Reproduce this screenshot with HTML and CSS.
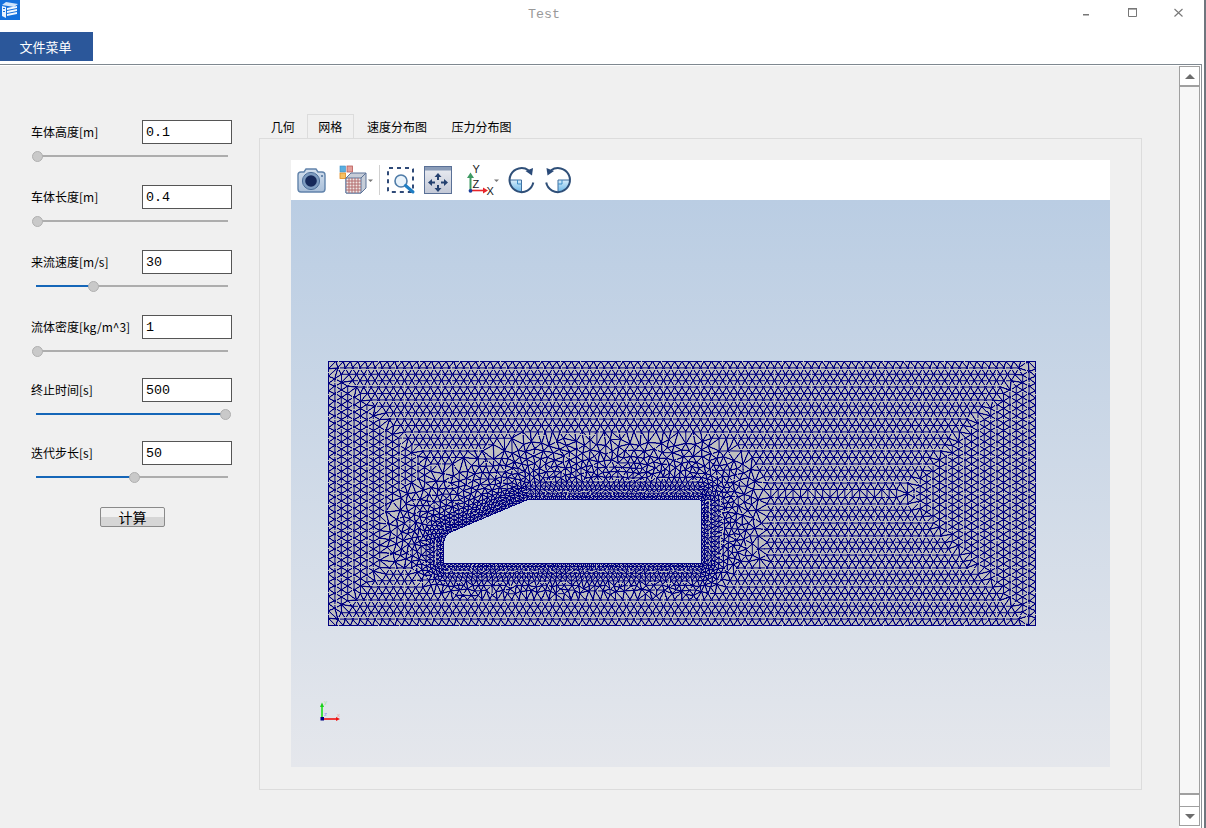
FILE: index.html
```html
<!DOCTYPE html>
<html lang="zh">
<head>
<meta charset="utf-8">
<title>Test</title>
<link rel="stylesheet" href="styles.css">
</head>
<body>
<div class="app">
  <header class="titlebar">
    <svg class="logo" viewBox="0 0 20 20" width="20" height="20">
      <rect width="20" height="20" fill="#1470dc"/>
      <path d="M2 5 L6 2 L18 4 L14 7 Z" fill="#cfe4fb"/>
      <path d="M2 6 L6 7 L6 18 L2 16 Z" fill="#e8f2fd"/>
      <path d="M7 8 L17 6 L17 8 L7 10 Z M7 11 L17 9 L17 11 L7 13 Z M7 14 L17 12 L17 14 L7 16 Z" fill="#f2f8ff"/>
      <path d="M3 8 H5 V9 H3 Z M3 11 H5 V12 H3 Z" fill="#1470dc"/>
    </svg>
    <div class="title">Test</div>
    <div class="winbtns">
      <svg class="winbtn" width="46" height="32" viewBox="0 0 46 32"><rect x="18" y="14" width="6" height="1.5" fill="#777"/></svg>
      <svg class="winbtn" width="46" height="32" viewBox="0 0 46 32"><path d="M17.5 8.500 H25.500 V16.500 H17.500 Z" fill="none" stroke="#777"/><rect x="17" y="8" width="9" height="1.6" fill="#777"/></svg>
      <svg class="winbtn" width="46" height="32" viewBox="0 0 46 32"><path d="M17.500 9 L25.500 16.500 M25.500 9 L17.500 16.500" stroke="#777" stroke-width="1.1" fill="none"/></svg>
    </div>
  </header>
  <nav class="menubar"><div class="menubtn">文件菜单</div></nav>
  <div class="frame">
    <main class="main">
      <aside class="panel">
        <div class="param">
          <div class="param-row"><span class="param-label">车体高度[m]</span><div class="field">0.1</div></div>
          <div class="slider"><div class="slider-fill" style="width:2px"></div><div class="slider-thumb" style="left:2px"></div></div>
        </div>
        <div class="param">
          <div class="param-row"><span class="param-label">车体长度[m]</span><div class="field">0.4</div></div>
          <div class="slider"><div class="slider-fill" style="width:2px"></div><div class="slider-thumb" style="left:2px"></div></div>
        </div>
        <div class="param">
          <div class="param-row"><span class="param-label">来流速度[m/s]</span><div class="field">30</div></div>
          <div class="slider"><div class="slider-fill" style="width:58px"></div><div class="slider-thumb" style="left:58px"></div></div>
        </div>
        <div class="param param-tight">
          <div class="param-row"><span class="param-label">流体密度[kg/m^3]</span><div class="field">1</div></div>
          <div class="slider"><div class="slider-fill" style="width:2px"></div><div class="slider-thumb" style="left:2px"></div></div>
        </div>
        <div class="param param-tight">
          <div class="param-row"><span class="param-label">终止时间[s]</span><div class="field">500</div></div>
          <div class="slider"><div class="slider-fill" style="width:190px"></div><div class="slider-thumb" style="left:190px"></div></div>
        </div>
        <div class="param">
          <div class="param-row"><span class="param-label">迭代步长[s]</span><div class="field">50</div></div>
          <div class="slider"><div class="slider-fill" style="width:99px"></div><div class="slider-thumb" style="left:99px"></div></div>
        </div>
        <div class="calc">计算</div>
      </aside>
      <section class="workspace">
        <div class="tabs">
          <div class="tab tab-short">几何</div>
          <div class="tab tab-short tab-active">网格</div>
          <div class="tab">速度分布图</div>
          <div class="tab">压力分布图</div>
        </div>
        <div class="pane">
          <div class="toolbar">
            <svg class="ti ti-camera" width="32" height="40" viewBox="0 0 32 40">
              <defs><linearGradient id="camg" x1="0" y1="0" x2="0" y2="1"><stop offset="0" stop-color="#d3e0ee"/><stop offset="1" stop-color="#a9bed8"/></linearGradient></defs>
              <path d="M8 12 L10 9 H20 L22 12 H26 Q29 12 29 15 V29 Q29 32 26 32 H5 Q2 32 2 29 V15 Q2 12 5 12 Z" fill="url(#camg)" stroke="#6183ab" stroke-width="1.4"/>
              <circle cx="15" cy="21" r="8.6" fill="#7e9cc0" stroke="#4d6f9a"/>
              <circle cx="15" cy="21" r="5.8" fill="#16295a"/>
              <circle cx="26" cy="16" r="1" fill="#4d6f9a"/>
            </svg>
            <svg class="ti ti-cube" width="40" height="40" viewBox="0 0 40 40">
              <rect x="4" y="6" width="5.5" height="6" fill="#5aaee0" stroke="#3a8cc4" stroke-width=".6"/>
              <rect x="11" y="6" width="5.5" height="6" fill="#e3a09c" stroke="#b85a58" stroke-width=".8"/>
              <rect x="4" y="13" width="5.5" height="5.5" fill="#f5c063" stroke="#e08a1e" stroke-width=".8"/>
              <path d="M10 18 L15 13 H30 V28 L25 33 H10 Z" fill="#c6cdd8" stroke="#5c7398"/>
              <path d="M10 18 H25 V33 H10 Z" fill="#efe6e4" stroke="#5c7398"/>
              <path d="M25 18 L30 13" stroke="#5c7398" fill="none"/>
              <path d="M13 18 V33 M16 18 V33 M19 18 V33 M22 18 V33 M10 21 H25 M10 24 H25 M10 27 H25 M10 30 H25" stroke="#b26a6c" stroke-width="1" fill="none"/>
              <path d="M32 19.5 H37 L34.5 22 Z" fill="#777"/>
            </svg>
            <div class="tsep"></div>
            <svg class="ti ti-zoom" width="30" height="40" viewBox="0 0 30 40">
              <rect x="2" y="8" width="25" height="24" rx="1" fill="none" stroke="#2f4a78" stroke-width="2" stroke-dasharray="4 4"/>
              <circle cx="15" cy="21" r="6" fill="#e9f3fb" stroke="#4f7ca8" stroke-width="1.6"/>
              <path d="M19.5 25.5 L27 32" stroke="#1f7fc5" stroke-width="3" stroke-linecap="round"/>
            </svg>
            <svg class="ti ti-pan" width="32" height="40" viewBox="0 0 32 40">
              <defs><linearGradient id="pang" x1="0" y1="0" x2="0" y2="1"><stop offset="0" stop-color="#eceef3"/><stop offset="1" stop-color="#c3c8d6"/></linearGradient></defs>
              <rect x="2.5" y="6.5" width="27" height="27" fill="url(#pang)" stroke="#5a7096"/>
              <rect x="3" y="7" width="26" height="3.5" fill="#8a9cb8"/>
              <path d="M16 13 L19.500 17 H17 V20 H15 V17 H12.500 Z M16 32 L19.500 28 H17 V25 H15 V28 H12.500 Z M6 22.500 L10 19 V21.500 H13 V23.500 H10 V26 Z M26 22.500 L22 19 V21.500 H19 V23.500 H22 V26 Z" fill="#24406f"/>
            </svg>
            <svg class="ti ti-axes" width="38" height="40" viewBox="0 0 38 40">
              <path d="M4.5 31 V17" stroke="#3e9a63" stroke-width="2"/>
              <path d="M4.5 12.5 L8 18 H1 Z" fill="#3e9a63"/>
              <path d="M5 30.5 H18" stroke="#e8242a" stroke-width="1.6"/>
              <path d="M22 30.5 L17 27.5 V33.5 Z" fill="#e8242a"/>
              <circle cx="4.5" cy="30.8" r="1.9" fill="#1d3f9c"/>
              <text class="axis-letter" x="6.5" y="13">Y</text>
              <text class="axis-letter" x="6.5" y="27.5">Z</text>
              <text class="axis-letter" x="20.5" y="35">X</text>
              <path d="M28 19.5 H33 L30.5 22 Z" fill="#777"/>
            </svg>
            <svg class="ti ti-rot1" width="30" height="40" viewBox="0 0 30 40">
              <defs><linearGradient id="rotg" x1="0" y1="0" x2="0" y2="1"><stop offset="0" stop-color="#d9eefb"/><stop offset="1" stop-color="#68b6e8"/></linearGradient></defs>
              <path d="M3.500 20 H15.500 V32 A12 12 0 0 1 3.500 20 Z" fill="url(#rotg)"/>
              <path d="M3.500 20 H15.500 V32" fill="none" stroke="#3f6f9f" stroke-width="1"/>
              <path d="M11.500 20 V24 H15.500" fill="none" stroke="#3f8fc8" stroke-width="1"/>
              <path d="M27.300 22.500 A12 12 0 1 1 22.500 10.300" fill="none" stroke="#2f4f78" stroke-width="2"/>
              <path d="M27 8 L26 15.500 L19.500 11 Z" fill="#2a4a78"/>
            </svg>
            <svg class="ti ti-rot2" width="30" height="40" viewBox="0 0 30 40">
              <path d="M27 20 H15 V32 A12 12 0 0 0 27 20 Z" fill="url(#rotg)"/>
              <path d="M27 20 H15 V32" fill="none" stroke="#3f6f9f" stroke-width="1"/>
              <path d="M19 20 V24 H15" fill="none" stroke="#3f8fc8" stroke-width="1"/>
              <path d="M3.200 22.500 A12 12 0 1 0 8 10.300" fill="none" stroke="#2f4f78" stroke-width="2"/>
              <path d="M3.500 8 L4.500 15.500 L11 11 Z" fill="#2a4a78"/>
            </svg>
          </div>
          <div class="viewport">
            <canvas id="mesh" class="mesh" width="708" height="265"></canvas>
            <svg class="triad" width="26" height="26" viewBox="0 0 26 26">
              <path d="M4 21 V8" stroke="#19e019" stroke-width="1.6"/>
              <path d="M4 4.500 L6 9 H2 Z" fill="#19d019"/>
              <path d="M5 21 H19" stroke="#f01010" stroke-width="1.6"/>
              <path d="M22 21 L18 19 V23 Z" fill="#f01010"/>
              <rect x="2.500" y="19" width="3.500" height="3.500" fill="#000080"/>
              <text class="triad-x" x="19" y="19">x</text>
              <text class="triad-y" x="6" y="6">y</text>
              <text class="triad-z" x="6" y="18">z</text>
            </svg>
          </div>
        </div>
      </section>
    </main>
    <div class="scrollbar">
      <div class="sb-btn"><span class="arrow-up"></span></div>
      <div class="sb-track"></div>
      <div class="sb-thumb"></div>
      <div class="sb-btn sb-btn-down"><span class="arrow-down"></span></div>
    </div>
  </div>
</div>
<script src="script.js"></script>
</body>
</html>
```

FILE: styles.css
```css
* { box-sizing: border-box; }
html, body { margin: 0; padding: 0; background: #fff; }
body { font-family: "Noto Sans CJK SC", "Liberation Sans", sans-serif; color: #000; }

.app {
  width: 1206px; height: 828px; display: flex; flex-direction: column;
  background: #fff; border-right: 2px solid #6f767e; overflow: hidden;
}

.titlebar { height: 32px; display: flex; align-items: flex-start; flex: none; }
.logo { display: block; flex: none; }
.title {
  flex: 1; text-align: center; padding-left: 3px; padding-top: 7px;
  font: 13.33px/16px "Liberation Mono", monospace; color: #999;
}
.winbtns { display: flex; flex: none; width: 139px; }
.winbtn { display: block; flex: none; }

.menubar { height: 32px; flex: none; }
.menubtn {
  width: 93px; height: 29px; padding-right: 2px; background: #2b579a; color: #fff;
  font-size: 13px; line-height: 29px; text-align: center;
}

.frame {
  flex: 1; min-height: 0; display: flex; width: 1202px;
  border-top: 1px solid #7f8890; border-right: 1px solid #8a9096;
  padding-top: 1px;
}
.main { width: 1179px; flex: none; background: #f0f0f0; display: flex; }

.panel { width: 259px; flex: none; padding: 54px 0 0 31px; }
.param { margin-bottom: 23px; }
.param-tight { margin-bottom: 21px; }
.param-row { display: flex; align-items: center; height: 24px; }
.param-label { width: 111px; flex: none; font-size: 12px; line-height: 16px; margin-top: -1px; white-space: nowrap; }
.field {
  width: 90px; height: 24px; background: #fff; border: 1px solid #555;
  padding-left: 3px; font: 13.33px/24px "Liberation Mono", monospace; color: #000;
}
.slider { position: relative; width: 192px; height: 12px; margin: 6px 0 0 5px; }
.slider::before {
  content: ""; position: absolute; left: 0; right: 0; top: 5px; height: 2px; background: #adadad;
}
.slider-fill { position: absolute; left: 0; top: 5px; height: 2px; background: #1566b8; }
.slider-thumb {
  position: absolute; top: 1px; width: 11px; height: 11px; margin-left: -6px; border-radius: 50%;
  background: #c9c9c9; border: 1px solid #b0b0b0;
}
.calc {
  width: 65px; height: 20px; margin: 24px 0 0 69px;
  border: 1px solid #8a8a8a; border-radius: 2px;
  background: linear-gradient(#f1f1f1 0 50%, #d6d6d6 50% 100%);
  font-size: 14px; line-height: 18px; text-align: center;
}

.workspace { width: 883px; flex: none; padding-top: 48px; }
.tabs { display: flex; height: 24px; }
.tab { padding: 0 12px; font-size: 12px; line-height: 24px; white-space: nowrap; border: 1px solid transparent; border-bottom: 0; width: 84.500px; text-align: center; }
.tab-short { width: 47.500px; padding: 0; }
.tab-active { border-color: #dcdcdc; }
.pane {
  width: 883px; height: 652px; border: 1px solid #dcdcdc; padding: 21px 0 0 31px;
}
.toolbar { width: 819px; height: 40px; background: #fff; display: flex; align-items: flex-start; }
.ti { display: block; flex: none; }
.ti-camera { margin-left: 5px; }
.ti-cube { margin-left: 8px; }
.tsep { width: 1px; height: 30px; margin: 5px 0 0 3px; background: #d0d0d0; flex: none; }
.ti-zoom { margin-left: 6px; }
.ti-pan { margin-left: 6px; }
.ti-axes { margin-left: 12px; }
.ti-rot1 { margin-left: 2px; }
.ti-rot2 { margin-left: 7px; }
.axis-letter { font: 11px "Liberation Sans", sans-serif; fill: #222; }

.viewport {
  position: relative; width: 819px; height: 567px; padding: 161px 0 0 37px;
  background: linear-gradient(#bacde3, #e5e7ec);
}
.mesh { display: block; }
.triad { position: absolute; left: 27px; top: 498px; }
.triad-x { font: 6px "Liberation Sans", sans-serif; fill: #f0a0a0; }
.triad-y { font: 6px "Liberation Sans", sans-serif; fill: #a0e0a0; }
.triad-z { font: 6px "Liberation Sans", sans-serif; fill: #9090f0; }

.scrollbar { width: 21px; flex: none; display: flex; flex-direction: column; margin-bottom: 2px; background: #fff; }
.sb-btn {
  height: 21px; flex: none; background: #fff; border: 1px solid #a0a0a0; border-bottom-width: 2px;
  display: flex; align-items: center; justify-content: center;
}
.sb-btn-down { height: 20px; border-bottom-width: 1px; }
.sb-track { flex: 1; background: #f7f7f7; border-left: 1px solid #a0a0a0; border-right: 1px solid #a0a0a0; }
.sb-thumb { height: 13px; flex: none; background: #fff; border: 1px solid #a0a0a0; border-top-width: 2px; border-bottom: 0; }
.arrow-up { width: 0; height: 0; border-left: 5px solid transparent; border-right: 5px solid transparent; border-bottom: 5px solid #6d6d6d; }
.arrow-down { width: 0; height: 0; border-left: 5px solid transparent; border-right: 5px solid transparent; border-top: 5px solid #6d6d6d; }
```

FILE: script.js
```js
(function () {
  var W = 707, H = 264;
  var car = [[115, 202], [115, 181], [116, 177], [118, 173.5], [121, 171], [197, 139], [199, 138], [373, 138], [373, 202]];

  function inCar(x, y) {
    var c = false;
    for (var i = 0, j = car.length - 1; i < car.length; j = i++) {
      var a = car[i], b = car[j];
      if ((a[1] > y) !== (b[1] > y) && x < (b[0] - a[0]) * (y - a[1]) / (b[1] - a[1]) + a[0]) c = !c;
    }
    return c;
  }
  function carDist(x, y) {
    if (inCar(x, y)) return 0;
    var m = 1e9;
    for (var i = 0; i < car.length; i++) {
      var a = car[i], b = car[(i + 1) % car.length];
      var dx = b[0] - a[0], dy = b[1] - a[1];
      var t = Math.max(0, Math.min(1, ((x - a[0]) * dx + (y - a[1]) * dy) / (dx * dx + dy * dy)));
      var ex = a[0] + t * dx - x, ey = a[1] + t * dy - y;
      m = Math.min(m, ex * ex + ey * ey);
    }
    return Math.sqrt(m);
  }
  function sizeAt(d) { return Math.min(8.2, 3.4 + 0.085 * d); }

  var seed = 12345;
  function rnd() { seed = (seed * 1103515245 + 12345) & 0x7fffffff; return seed / 0x7fffffff - 0.5; }

  var pts = [], grid = {}, CELL = 8;
  function tooClose(x, y, r) {
    var cx = Math.floor(x / CELL), cy = Math.floor(y / CELL);
    for (var i = cx - 1; i <= cx + 1; i++) for (var j = cy - 1; j <= cy + 1; j++) {
      var g = grid[i * 1000 + j];
      if (!g) continue;
      for (var k = 0; k < g.length; k++) {
        var dx = g[k][0] - x, dy = g[k][1] - y;
        if (dx * dx + dy * dy < r * r) return true;
      }
    }
    return false;
  }
  function add(x, y, r) {
    if (x < 0 || y < 0 || x > W || y > H) return;
    if (inCar(x, y) && carDist(x, y) > 0) return;
    if (tooClose(x, y, r)) return;
    var p = [x, y];
    var key = Math.floor(x / CELL) * 1000 + Math.floor(y / CELL);
    (grid[key] = grid[key] || []).push(p);
    pts.push(p);
  }

  // outer boundary
  var nx = Math.round(W / 7.4), ny = Math.round(H / 7.4), i, k;
  for (i = 0; i <= nx; i++) { add(i * W / nx, 0, 1); add(i * W / nx, H, 1); }
  for (i = 1; i < ny; i++) { add(0, i * H / ny, 1); add(W, i * H / ny, 1); }
  var boundaryCount = pts.length;

  // rings close to the car: convex offset curves, resampled
  function offsetCurve(e) {
    var out = [], n = car.length;
    var nrm = [];
    for (var a = 0; a < n; a++) {
      var p = car[a], q = car[(a + 1) % n];
      var dx = q[0] - p[0], dy = q[1] - p[1], l = Math.hypot(dx, dy);
      var o = [dy / l, -dx / l];
      if (!inCar((p[0] + q[0]) / 2 - o[0] * 0.5, (p[1] + q[1]) / 2 - o[1] * 0.5)) o = [-o[0], -o[1]];
      nrm.push(o);
    }
    for (var b = 0; b < n; b++) {
      var p1 = car[b], p2 = car[(b + 1) % n], o1 = nrm[b], o2 = nrm[(b + 1) % n];
      out.push([p1[0] + o1[0] * e, p1[1] + o1[1] * e]);
      out.push([p2[0] + o1[0] * e, p2[1] + o1[1] * e]);
      var a1 = Math.atan2(o1[1], o1[0]), a2 = Math.atan2(o2[1], o2[0]), d = a2 - a1;
      while (d > Math.PI) d -= 2 * Math.PI;
      while (d < -Math.PI) d += 2 * Math.PI;
      for (var c = 1; c < 6; c++) {
        var t = a1 + d * c / 6;
        out.push([p2[0] + Math.cos(t) * e, p2[1] + Math.sin(t) * e]);
      }
    }
    out.push(out[0]);
    return out;
  }
  function resample(poly, step, phase) {
    var len = 0, s;
    for (s = 1; s < poly.length; s++) len += Math.hypot(poly[s][0] - poly[s - 1][0], poly[s][1] - poly[s - 1][1]);
    var n = Math.round(len / step), d = len / n, res = [], want = phase * d, run = 0;
    for (s = 1; s < poly.length; s++) {
      var a = poly[s - 1], b = poly[s], l = Math.hypot(b[0] - a[0], b[1] - a[1]);
      while (l > 0 && want <= run + l) {
        var t = (want - run) / l;
        res.push([a[0] + (b[0] - a[0]) * t, a[1] + (b[1] - a[1]) * t]);
        want += d;
      }
      run += l;
    }
    return res;
  }
  var e = 0, s = 3.5, j = 0;
  while (e < 20) {
    var r = resample(offsetCurve(e), s * 1.12, j % 2 ? 0.5 : 0);
    for (i = 0; i < r.length; i++) add(r[i][0], r[i][1], e === 0 ? 0.5 : s * 0.72);
    e += s * 0.88;
    s *= 1.06;
    j++;
  }

  // concentric rectangular rows from the outer boundary
  var cx = W / 2, cy = H / 2, STEP = 6.4, SP = 7.4;
  function far(x, y) {
    return carDist(x, y) > (y > 202 ? 30 : 62);
  }
  for (k = 1; k * STEP < H / 2 + 2; k++) {
    var ins = k * STEP, off = k % 2 ? 0.5 : 0;
    for (i = -60; i <= 60; i++) {
      var x = cx + (i + off) * SP;
      if (x >= ins - 0.1 && x <= W - ins + 0.1) {
        if (far(x, ins)) add(x, ins, SP * 0.78);
        if (far(x, H - ins)) add(x, H - ins, SP * 0.78);
      }
      var y = cy + (i + off) * SP;
      if (y >= ins - 0.1 && y <= H - ins + 0.1) {
        if (far(ins, y)) add(ins, y, SP * 0.78);
        if (far(W - ins, y)) add(W - ins, y, SP * 0.78);
      }
    }
  }

  // graded, irregular fill between the near rings and the rows
  var cand = [], fx, fy;
  for (fy = 0; fy <= H; fy += 1.9) for (fx = 0; fx <= W; fx += 1.9) {
    var qx = fx + rnd() * 1.6, qy = fy + rnd() * 1.6, qd = carDist(qx, qy);
    if (qd > 0.5) cand.push([qx, qy, qd]);
  }
  cand.sort(function (p, q) { return p[2] - q[2]; });
  cand.forEach(function (c) { add(c[0], c[1], sizeAt(c[2]) * 0.88); });

  pts.forEach(function (p, idx) {
    if (idx < boundaryCount) return;
    p[0] += rnd() * 0.05; p[1] += rnd() * 0.05;
  });

  // Delaunay triangulation (sweep over x)
  function circum(a, b, c) {
    var A = pts2[a], B = pts2[b], C = pts2[c];
    var d = 2 * ((B[0] - A[0]) * (C[1] - A[1]) - (B[1] - A[1]) * (C[0] - A[0]));
    if (Math.abs(d) < 1e-12) d = 1e-12;
    var b2 = (B[0] - A[0]) * (B[0] - A[0]) + (B[1] - A[1]) * (B[1] - A[1]);
    var c2 = (C[0] - A[0]) * (C[0] - A[0]) + (C[1] - A[1]) * (C[1] - A[1]);
    var ux = ((C[1] - A[1]) * b2 - (B[1] - A[1]) * c2) / d;
    var uy = ((B[0] - A[0]) * c2 - (C[0] - A[0]) * b2) / d;
    return { a: a, b: b, c: c, x: A[0] + ux, y: A[1] + uy, r: ux * ux + uy * uy };
  }
  var n = pts.length;
  var pts2 = pts.concat([[-5000, -5000], [8000, -5000], [300, 12000]]);
  var order = [];
  for (i = 0; i < n; i++) order.push(i);
  order.sort(function (p, q) { return pts[p][0] - pts[q][0]; });
  var open = [circum(n, n + 1, n + 2)], closed = [];
  for (i = 0; i < n; i++) {
    var pi = order[i], P = pts[pi], edges = {};
    for (j = open.length - 1; j >= 0; j--) {
      var T = open[j], dx = P[0] - T.x;
      if (dx > 0 && dx * dx > T.r) { closed.push(T); open.splice(j, 1); continue; }
      var dy = P[1] - T.y;
      if (dx * dx + dy * dy > T.r) continue;
      [[T.a, T.b], [T.b, T.c], [T.c, T.a]].forEach(function (ed) {
        var u = Math.min(ed[0], ed[1]), v = Math.max(ed[0], ed[1]), key = u + "_" + v;
        if (edges[key]) edges[key] = -1; else edges[key] = [u, v];
      });
      open.splice(j, 1);
    }
    for (var ke in edges) {
      if (edges[ke] !== -1) open.push(circum(edges[ke][0], edges[ke][1], pi));
    }
  }
  var tris = closed.concat(open);
  var lines = {};
  tris.forEach(function (t) {
    if (t.a >= n || t.b >= n || t.c >= n) return;
    var A = pts[t.a], B = pts[t.b], C = pts[t.c];
    if (inCar((A[0] + B[0] + C[0]) / 3, (A[1] + B[1] + C[1]) / 3)) return;
    [[t.a, t.b], [t.b, t.c], [t.c, t.a]].forEach(function (ed) {
      lines[Math.min(ed[0], ed[1]) + "_" + Math.max(ed[0], ed[1])] = ed;
    });
  });

  // raster: grey fill, hard dark-blue edges like the VTK view
  var cv = document.getElementById("mesh"), ctx = cv.getContext("2d");
  var CW = W + 1, CH = H + 1, img = ctx.createImageData(CW, CH), D = img.data;
  var X, Y, o;
  for (Y = 0; Y < CH; Y++) for (X = 0; X < CW; X++) {
    if (inCar(X + 0.01, Y + 0.01)) continue;
    o = (Y * CW + X) * 4;
    D[o] = 192; D[o + 1] = 192; D[o + 2] = 190; D[o + 3] = 255;
  }
  var LR = 0, LG = 0, LB = 128;
  function plot(x, y, c) {
    if (x < 0 || y < 0 || x >= CW || y >= CH) return;
    var q = (y * CW + x) * 4;
    if (D[q + 3] === 0) {
      if (c < 0.5) return;
      D[q] = 192; D[q + 1] = 192; D[q + 2] = 190; D[q + 3] = 255;
    }
    D[q] += (LR - D[q]) * c; D[q + 1] += (LG - D[q + 1]) * c; D[q + 2] += (LB - D[q + 2]) * c;
  }
  function line(a, b) {
    var x0 = a[0], y0 = a[1], x1 = b[0], y1 = b[1];
    var dx = x1 - x0, dy = y1 - y0, steps = Math.round(Math.max(Math.abs(dx), Math.abs(dy))), t, x, y, f, fl, rr;
    if (steps === 0) steps = 1;
    if (Math.abs(dy) < 0.035 * Math.abs(dx)) {
      for (t = 0; t <= steps; t++) {
        x = Math.round(x0 + dx * t / steps); y = y0 + dy * t / steps;
        fl = Math.floor(y); f = y - fl;
        if (f < 0.08) plot(x, fl, 1); else if (f > 0.92) plot(x, fl + 1, 1);
        else { plot(x, fl, 1 - f); plot(x, fl + 1, f); }
      }
    } else if (Math.abs(dx) < 0.035 * Math.abs(dy)) {
      for (t = 0; t <= steps; t++) {
        y = Math.round(y0 + dy * t / steps); x = x0 + dx * t / steps;
        fl = Math.floor(x); f = x - fl;
        if (f < 0.08) plot(fl, y, 1); else if (f > 0.92) plot(fl + 1, y, 1);
        else { plot(fl, y, 1 - f); plot(fl + 1, y, f); }
      }
    } else if (Math.abs(dx) >= Math.abs(dy)) {
      for (t = 0; t <= steps; t++) {
        x = Math.round(x0 + dx * t / steps); y = y0 + dy * t / steps; rr = Math.round(y); f = y - rr;
        plot(x, rr, 1); plot(x, rr + (f < 0 ? -1 : 1), Math.abs(f) * 0.8 + 0.1);
      }
    } else {
      for (t = 0; t <= steps; t++) {
        y = Math.round(y0 + dy * t / steps); x = x0 + dx * t / steps; rr = Math.round(x); f = x - rr;
        plot(rr, y, 1); plot(rr + (f < 0 ? -1 : 1), y, Math.abs(f) * 0.8 + 0.1);
      }
    }
  }
  for (var key in lines) line(pts[lines[key][0]], pts[lines[key][1]]);
  ctx.putImageData(img, 0, 0);
})();
```
